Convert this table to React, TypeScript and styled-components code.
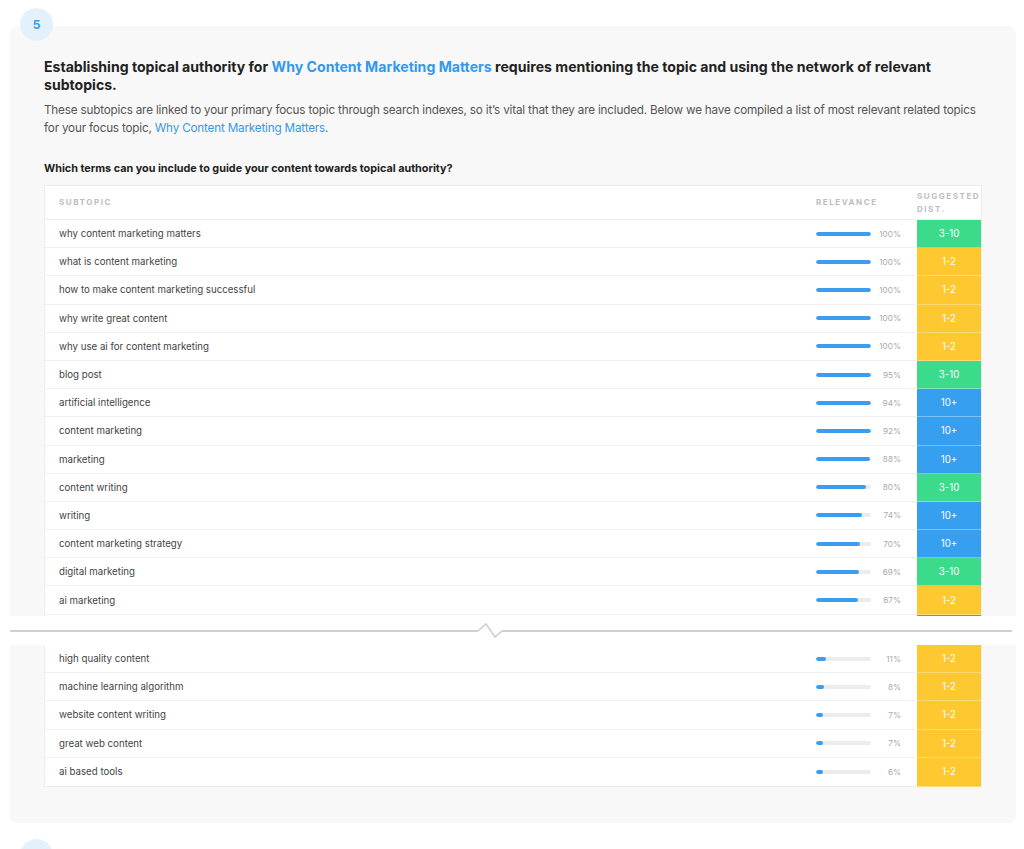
import styled, { createGlobalStyle } from "styled-components"

const GlobalStyle = createGlobalStyle`
  body {
    margin: 0;
    background: #fff;
    font-family: Inter, "Noto Sans", sans-serif;
    color: #222;
  }
`

type Dist = "3-10" | "1-2" | "10+"
type Row = { topic: string; value: number; dist: Dist }

const topRows: Row[] = [
  { topic: "why content marketing matters", value: 100, dist: "3-10" },
  { topic: "what is content marketing", value: 100, dist: "1-2" },
  { topic: "how to make content marketing successful", value: 100, dist: "1-2" },
  { topic: "why write great content", value: 100, dist: "1-2" },
  { topic: "why use ai for content marketing", value: 100, dist: "1-2" },
  { topic: "blog post", value: 95, dist: "3-10" },
  { topic: "artificial intelligence", value: 94, dist: "10+" },
  { topic: "content marketing", value: 92, dist: "10+" },
  { topic: "marketing", value: 88, dist: "10+" },
  { topic: "content writing", value: 80, dist: "3-10" },
  { topic: "writing", value: 74, dist: "10+" },
  { topic: "content marketing strategy", value: 70, dist: "10+" },
  { topic: "digital marketing", value: 69, dist: "3-10" },
  { topic: "ai marketing", value: 67, dist: "1-2" },
]

const bottomRows: Row[] = [
  { topic: "high quality content", value: 11, dist: "1-2" },
  { topic: "machine learning algorithm", value: 8, dist: "1-2" },
  { topic: "website content writing", value: 7, dist: "1-2" },
  { topic: "great web content", value: 7, dist: "1-2" },
  { topic: "ai based tools", value: 6, dist: "1-2" },
]

const distColors: Record<Dist, string> = {
  "3-10": "#3cdb8c",
  "1-2": "#fec830",
  "10+": "#379ff0",
}

const Page = styled.div`
  padding: 8px 8px 0 10px;
`

const Badge = styled.div`
  position: relative;
  z-index: 1;
  width: 33px;
  height: 33px;
  margin: 0 0 -15px 10px;
  border-radius: 50%;
  background: #e3f1fd;
  color: #3b9cf0;
  font-size: 12px;
  font-weight: 700;
  display: flex;
  align-items: center;
  justify-content: center;
`

const CardTop = styled.section`
  height: 590px;
  overflow: hidden;
  background: #f8f8f8;
  border-radius: 8px 8px 0 0;
  padding: 32px 34px 0;
  box-sizing: border-box;
`

const CardBottom = styled.section`
  background: #f8f8f8;
  border-radius: 0 0 8px 8px;
  padding: 0 34px 36px;
`

const Heading = styled.h2`
  margin: 0;
  font-size: 14.1px;
  line-height: 18px;
  font-weight: 700;
  color: #222;
`

const Link = styled.span<{ $bold?: boolean }>`
  color: #3399ee;
  font-weight: ${(p) => (p.$bold ? 700 : 400)};
`

const Intro = styled.p`
  margin: 7px 0 0;
  font-size: 11.7px;
  letter-spacing: -0.18px;
  line-height: 18px;
  color: #555;
`

const Question = styled.h3`
  margin: 24px 0 8px;
  font-size: 10.8px;
  line-height: 16px;
  font-weight: 700;
  color: #222;
`

const Table = styled.div<{ $open?: "top" | "bottom" }>`
  background: #fff;
  border: 1px solid #ececec;
  border-top-width: ${(p) => (p.$open === "bottom" ? "0" : "1px")};
  border-bottom-width: ${(p) => (p.$open === "top" ? "0" : "1px")};
`

const HeaderRow = styled.div`
  display: grid;
  grid-template-columns: 1fr 101px 64px;
  height: 33px;
  border-bottom: 1px solid #eeeeee;
`

const HeadCell = styled.div<{ $pad?: number }>`
  display: flex;
  align-items: center;
  padding-left: ${(p) => p.$pad ?? 0}px;
  font-size: 8px;
  line-height: 13px;
  font-weight: 700;
  letter-spacing: 1.55px;
  color: #bdbdbd;
`

const DataRow = styled.div`
  display: grid;
  grid-template-columns: 1fr 101px 64px;
  height: 28.2px;
  box-sizing: border-box;
  border-bottom: 1px solid #f0f0f0;
  &:last-child {
    border-bottom: 0;
  }
`

const Topic = styled.div`
  display: flex;
  align-items: center;
  padding-left: 14px;
  font-size: 9.7px;
  color: #444;
`

const Relevance = styled.div`
  display: flex;
  align-items: center;
  gap: 5px;
`

const Track = styled.div`
  width: 55px;
  height: 4px;
  border-radius: 2px;
  background: #ececec;
  overflow: hidden;
`

const Fill = styled.div`
  height: 100%;
  border-radius: 2px;
  background: #3b9cf0;
`

const Percent = styled.span`
  width: 25px;
  text-align: right;
  font-size: 8.2px;
  color: #a8a8a8;
`

const DistCell = styled.div<{ $color: string }>`
  display: flex;
  align-items: center;
  justify-content: center;
  margin-bottom: -1px;
  background: ${(p) => p.$color};
  border-bottom: 1px solid rgba(255, 255, 255, 0.35);
  color: #fff;
  font-size: 9.7px;
`

/* the top edge of the row that continues below the cut */
const PeekRow = styled.div`
  display: grid;
  grid-template-columns: 1fr 101px 64px;
  height: 28px;
`

const Break = styled.div`
  height: 29px;
  display: flex;
  align-items: center;
  margin-right: 4px;
`

const BreakLine = styled.div<{ $width?: number }>`
  flex: ${(p) => (p.$width ? `0 0 ${p.$width}px` : "1")};
  height: 2px;
  background: #cfcfcf;
`

const NextBadge = styled(Badge)`
  margin: 16px 0 0 10px;
`

function TopicRow({ row }: { row: Row }) {
  const fill = Math.min(100, row.value * 1.05 + 6)
  return (
    <DataRow>
      <Topic>{row.topic}</Topic>
      <Relevance>
        <Track>
          <Fill style={{ width: `${fill}%` }} />
        </Track>
        <Percent>{row.value}%</Percent>
      </Relevance>
      <DistCell $color={distColors[row.dist]}>{row.dist}</DistCell>
    </DataRow>
  )
}

export default function App() {
  return (
    <Page>
      <GlobalStyle />
      <Badge>5</Badge>
      <CardTop>
        <Heading>
          Establishing topical authority for <Link $bold>Why Content Marketing Matters</Link>{" "}
          requires mentioning the topic and using the network of relevant subtopics.
        </Heading>
        <Intro>
          These subtopics are linked to your primary focus topic through search indexes, so it’s vital
          that they are included. Below we have compiled a list of most relevant related topics for
          your focus topic, <Link>Why Content Marketing Matters</Link>.
        </Intro>
        <Question>Which terms can you include to guide your content towards topical authority?</Question>
        <Table $open="top">
          <HeaderRow>
            <HeadCell $pad={14}>SUBTOPIC</HeadCell>
            <HeadCell>RELEVANCE</HeadCell>
            <HeadCell>SUGGESTED DIST.</HeadCell>
          </HeaderRow>
          {topRows.map((r) => (
            <TopicRow key={r.topic} row={r} />
          ))}
          <PeekRow>
            <div />
            <div />
            <DistCell $color={distColors["10+"]} />
          </PeekRow>
        </Table>
      </CardTop>
      <Break>
        <BreakLine $width={468} />
        <svg width="24" height="18" viewBox="0 0 24 18" fill="none">
          <polyline
            points="0,9 8,2 17,15 24,9"
            stroke="#cfcfcf"
            strokeWidth="1.6"
            strokeLinejoin="miter"
          />
        </svg>
        <BreakLine />
      </Break>
      <CardBottom>
        <Table $open="bottom">
          {bottomRows.map((r) => (
            <TopicRow key={r.topic} row={r} />
          ))}
        </Table>
      </CardBottom>
      <NextBadge />
    </Page>
  )
}
